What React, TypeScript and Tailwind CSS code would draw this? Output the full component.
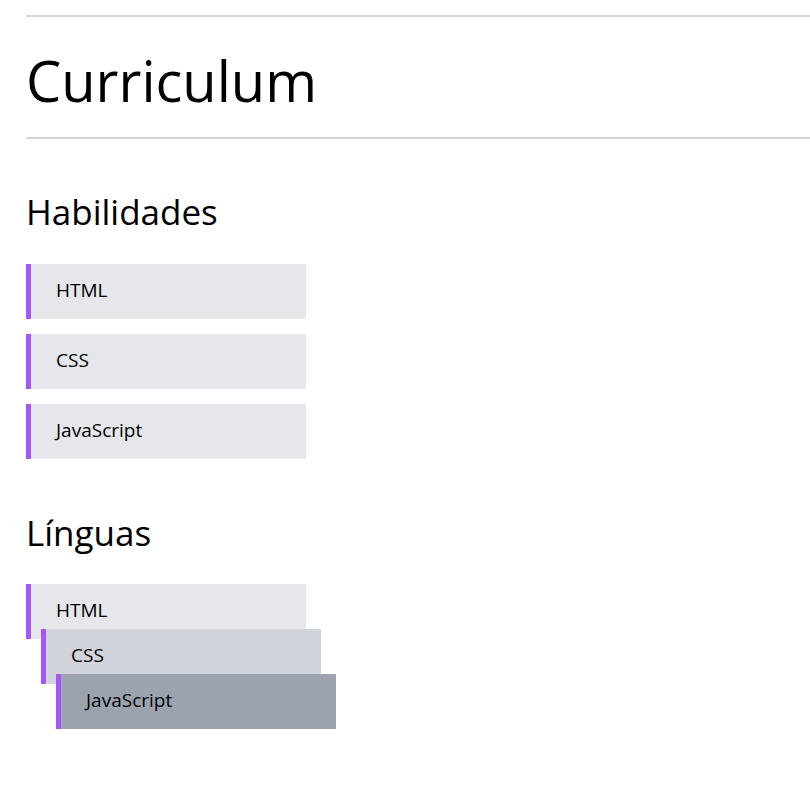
import React from "react";

const skills = ["HTML", "CSS", "JavaScript"];

function Item({ label, className = "" }: { label: string; className?: string }) {
  return (
    <div
      className={`flex h-[55px] w-[280px] items-center border-l-[5px] border-[#a855f7] pb-[2px] pl-[25px] text-[19px] text-black ${className}`}
    >
      {label}
    </div>
  );
}

export default function App() {
  return (
    <div
      className="min-h-[791px] bg-white pl-[26px] text-black"
      style={{ fontFamily: '"Open Sans", "Noto Sans", sans-serif' }}
    >
      <div className="pt-[15px]">
        <div className="border-t-2 border-[#d1d5db]" />
      </div>
      <h1 className="mt-[35px] text-[56px] leading-none font-normal">Curriculum</h1>
      <div className="mt-[29px] border-t-2 border-[#d1d5db]" />

      <section>
        <h2 className="mt-[55px] text-[35px] leading-none font-normal">Habilidades</h2>
        <div className="mt-[35px] flex flex-col gap-[15px]">
          {skills.map((s) => (
            <Item key={s} label={s} className="bg-[#e5e7eb]" />
          ))}
        </div>
      </section>

      <section>
        <h2 className="mt-[56px] text-[35px] leading-none font-normal">Línguas</h2>
        <div className="mt-[34px] flex flex-col">
          <Item label="HTML" className="bg-[#e5e7eb]" />
          <Item label="CSS" className="relative -mt-[10px] ml-[15px] bg-[#d1d5db]" />
          <Item label="JavaScript" className="relative -mt-[10px] ml-[30px] bg-[#9ca3af]" />
        </div>
      </section>
    </div>
  );
}
